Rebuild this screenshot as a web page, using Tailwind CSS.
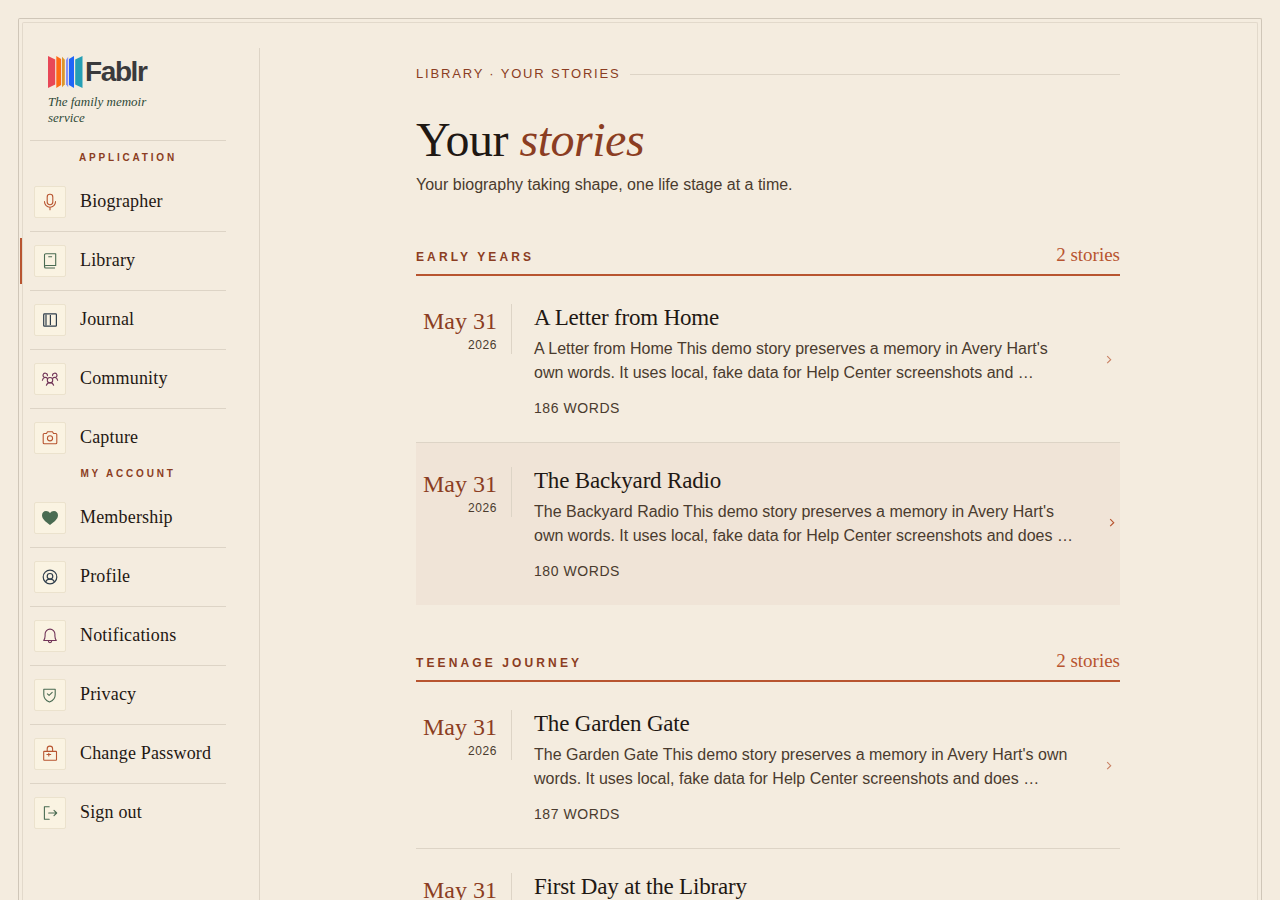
<!DOCTYPE html>
<html lang="en">
<head>
<meta charset="utf-8">
<meta name="viewport" content="width=device-width, initial-scale=1">
<title>Fablr – Your stories</title>
<script src="https://cdn.jsdelivr.net/npm/@tailwindcss/browser@4"></script>
</head>
<body class="h-screen overflow-hidden bg-[#f4ecdf] font-['Liberation_Sans',Arial,sans-serif] text-[#1f1813]">
<div class="mx-[18px] mt-[18px] rounded-t-[2px] border border-b-0 border-[#cfc6b8] px-[3px] pt-[3px]">
<div class="flex min-h-screen rounded-t-[2px] border border-b-0 border-[#e2d9cb] pt-[25px]">

  <aside class="w-[237px] shrink-0 border-r border-[#ddd4c6] pr-[33px] pl-[7px] pt-2">
    <a href="#" class="block border-b border-[#ddd4c6] px-[18px] pb-[14px]">
      <span class="flex h-8 items-center gap-[2px]">
        <svg class="h-8 w-[35px]" viewBox="0 0 35 32" aria-hidden="true">
          <path fill="#e84757" d="M0 0l7.200 3.600v24.800L0 32z"/>
          <path fill="#ff6a13" d="M8.300 0l4.800 3v26l-4.800 3z"/>
          <path fill="#dc962d" d="M14 0.800l2.800 3v24.400l-2.800 3z"/>
          <path fill="#8490f8" d="M20.200 0.800v30.400l-2.200-3V3.800z"/>
          <path fill="#2065f8" d="M26 0v32l-5-3V3z"/>
          <path fill="#259fb5" d="M34.500 0v32L27.200 28.400V3.600z"/>
        </svg>
        <span class="text-[28px] leading-8 font-bold tracking-tighter text-[#3a3a3c]">Fablr</span>
      </span>
      <span class="mt-[6px] block w-[112px] font-['Liberation_Serif',serif] text-[13px] leading-4 text-[#2f4a38] italic">The family memoir service</span>
    </a>

    <nav aria-label="Application">
      <h2 class="pt-[11px] pb-[9px] text-center text-[10px] leading-3 font-bold tracking-[0.28em] text-[#8b3d22]">APPLICATION</h2>
      <ul class="divide-y divide-[#ddd4c6] font-['Liberation_Serif',serif] text-[18px] leading-6 tracking-[0.01em]">
        <li><a href="#" class="flex items-center gap-[14px] px-1 py-[13px]">
          <svg class="size-8 shrink-0 rounded-[2px] border border-[#ebe2cd] bg-[#faf3e2] text-[#b85530]" viewBox="1 1 30 30" fill="none" stroke="currentColor" stroke-width="1.100" stroke-linecap="round" stroke-linejoin="round" aria-hidden="true"><rect x="13.200" y="8.300" width="5.600" height="10.400" rx="2.600"/><path d="M10.500 15.500v.3a5.500 5.400 0 0 0 11 0v-.3M16 21.300v2.500"/></svg>
          <span class="pb-[2px]">Biographer</span></a></li>
        <li class="relative"><span class="absolute top-[6px] -left-[10px] h-[46px] w-[2px] bg-[#b85530]"></span><a href="#" aria-current="page" class="flex items-center gap-[14px] px-1 py-[13px]">
          <svg class="size-8 shrink-0 rounded-[2px] border border-[#ebe2cd] bg-[#faf3e2] text-[#4a6b52]" viewBox="1 1 30 30" fill="none" stroke="currentColor" stroke-width="1.100" stroke-linejoin="round" aria-hidden="true"><path d="M21 23H11.800a1.300 1.300 0 0 1-1.300-1.300V10A1.300 1.300 0 0 1 11.800 8.700h9.900v11.800H11.800a1.300 1.300 0 0 0-1.300 1.200M14.300 11.800h3.800"/></svg>
          <span class="pb-[2px]">Library</span></a></li>
        <li><a href="#" class="flex items-center gap-[14px] px-1 py-[13px]">
          <svg class="size-8 shrink-0 rounded-[2px] border border-[#ebe2cd] bg-[#faf3e2] text-[#2f3e4c]" viewBox="1 1 30 30" fill="none" stroke="currentColor" stroke-width="1.200" aria-hidden="true"><rect x="9.700" y="9.900" width="12.700" height="12.300" rx=".8"/><path d="M12 10.500v11M16.400 11v10"/></svg>
          <span class="pb-[2px]">Journal</span></a></li>
        <li><a href="#" class="flex items-center gap-[14px] px-1 py-[13px]">
          <svg class="size-8 shrink-0 rounded-[2px] border border-[#ebe2cd] bg-[#faf3e2] text-[#713558]" viewBox="1 1 30 30" fill="none" stroke="currentColor" stroke-width="1.100" stroke-linecap="round" aria-hidden="true"><circle cx="16" cy="17.200" r="2.700"/><path d="M12.400 22.200a3.800 3.800 0 0 1 7.200 0M13.400 12.700a2.200 2.200 0 1 0-2.900 1.700M8.400 17.300q.5-2.300 2.300-2.800 1.600-.4 2.600.8M18.600 12.700a2.200 2.200 0 1 1 2.900 1.700M23.600 17.300q-.5-2.300-2.300-2.800-1.600-.4-2.600.8"/></svg>
          <span class="pb-[2px]">Community</span></a></li>
        <li><a href="#" class="flex items-center gap-[14px] px-1 py-[13px]">
          <svg class="size-8 shrink-0 rounded-[2px] border border-[#ebe2cd] bg-[#faf3e2] text-[#b85530]" viewBox="1 1 30 30" fill="none" stroke="currentColor" stroke-width="1.100" stroke-linejoin="round" aria-hidden="true"><path d="M10.200 11.500h2.300l1-1.700h5l1 1.700h2.300q1 0 1 1v8.200q0 1-1 1H10.200q-1 0-1-1v-8.200q0-1 1-1z"/><circle cx="16" cy="16.300" r="2.600"/></svg>
          <span class="pb-[2px]">Capture</span></a></li>
      </ul>
    </nav>

    <nav aria-label="My account">
      <h2 class="pt-px pb-[9px] text-center text-[10px] leading-3 font-bold tracking-[0.28em] text-[#8b3d22]">MY ACCOUNT</h2>
      <ul class="divide-y divide-[#ddd4c6] font-['Liberation_Serif',serif] text-[18px] leading-6 tracking-[0.01em]">
        <li><a href="#" class="flex items-center gap-[14px] px-1 py-[13px]">
          <svg class="size-8 shrink-0 rounded-[2px] border border-[#ebe2cd] bg-[#faf3e2] text-[#4a6b52]" viewBox="1 1 30 30" fill="currentColor" aria-hidden="true"><path d="M16 23C11.500 19.800 8 17 8 13.300 8 10.700 9.800 9 12 9c1.700 0 3.200.9 4 2.300C16.800 9.900 18.300 9 20 9c2.200 0 4 1.700 4 4.300 0 3.700-3.500 6.500-8 9.700z"/></svg>
          <span class="pb-[2px]">Membership</span></a></li>
        <li><a href="#" class="flex items-center gap-[14px] px-1 py-[13px]">
          <svg class="size-8 shrink-0 rounded-[2px] border border-[#ebe2cd] bg-[#faf3e2] text-[#2f3e4c]" viewBox="1 1 30 30" fill="none" stroke="currentColor" stroke-width="1.200" aria-hidden="true"><circle cx="16" cy="16" r="6.800"/><circle cx="16" cy="15.300" r="2.800"/><path d="M11.500 21q1.300-2.800 4.500-2.800t4.500 2.800"/></svg>
          <span class="pb-[2px]">Profile</span></a></li>
        <li><a href="#" class="flex items-center gap-[14px] px-1 py-[13px]">
          <svg class="size-8 shrink-0 rounded-[2px] border border-[#ebe2cd] bg-[#faf3e2] text-[#713558]" viewBox="1 1 30 30" fill="none" stroke="currentColor" stroke-width="1.100" stroke-linecap="round" stroke-linejoin="round" aria-hidden="true"><path d="M9.700 20.500q1.300-1.600 1.400-4.500v-2a4.900 4.900 0 0 1 9.800 0v2q.1 2.900 1.400 4.500zM14.300 20.800a1.700 1.800 0 0 0 3.400 0"/></svg>
          <span class="pb-[2px]">Notifications</span></a></li>
        <li><a href="#" class="flex items-center gap-[14px] px-1 py-[13px]">
          <svg class="size-8 shrink-0 rounded-[2px] border border-[#ebe2cd] bg-[#faf3e2] text-[#4a6b52]" viewBox="1 1 30 30" fill="none" stroke="currentColor" stroke-width="1.100" stroke-linecap="round" stroke-linejoin="round" aria-hidden="true"><path d="M9.800 10.300h11.400v5.400c0 3.700-2.500 6.100-5.700 7.300-3.200-1.200-5.700-3.600-5.700-7.300zM13.400 14.800l1.700 1.600 3.100-3"/></svg>
          <span class="pb-[2px]">Privacy</span></a></li>
        <li><a href="#" class="flex items-center gap-[14px] px-1 py-[13px]">
          <svg class="size-8 shrink-0 rounded-[2px] border border-[#ebe2cd] bg-[#faf3e2] text-[#b85530]" viewBox="1 1 30 30" fill="none" stroke="currentColor" stroke-width="1.100" stroke-linecap="round" aria-hidden="true"><rect x="9.700" y="13.400" width="12.800" height="8.900" rx=".5"/><path d="M13.200 13.200v-2.400a2.700 2.700 0 0 1 5.400 0v2.400M12.900 16.500h3.800M14.800 15.200v2.700"/></svg>
          <span class="pb-[2px]">Change Password</span></a></li>
        <li><a href="#" class="flex items-center gap-[14px] px-1 py-[13px]">
          <svg class="size-8 shrink-0 rounded-[2px] border border-[#ebe2cd] bg-[#faf3e2] text-[#4a6b52]" viewBox="1 1 30 30" fill="none" stroke="currentColor" stroke-width="1.100" stroke-linecap="round" stroke-linejoin="round" aria-hidden="true"><path d="M15.200 9.800h-4.800v12.400h4.800M14.700 16h8M20 13.300l2.700 2.700-2.700 2.700"/></svg>
          <span class="pb-[2px]">Sign out</span></a></li>
      </ul>
    </nav>
  </aside>

  <main class="min-w-0 flex-1 pt-4 pl-[19px]">
    <div class="mx-auto max-w-[704px]">
      <div class="flex items-center gap-[9px] text-[13px] leading-5 tracking-[0.14em] text-[#8b3d22]">
        <span>LIBRARY · YOUR STORIES</span><span class="h-px flex-1 bg-[#ddd4c6]"></span>
      </div>
      <h1 class="mt-[30px] font-['Liberation_Serif',serif] text-[48px] leading-[52px] tracking-[-0.01em]">Your <em class="text-[#8b3d22]">stories</em></h1>
      <p class="mt-[7px] text-[16px] leading-6 text-[#4a3b2e]">Your biography taking shape, one life stage at a time.</p>

      <section class="mt-[46px]">
        <header class="flex items-baseline justify-between border-b-2 border-[#b85530] pb-[5px]">
          <h2 class="text-[12px] leading-6 font-bold tracking-[0.26em] text-[#8b3d22]">EARLY YEARS</h2>
          <span class="font-['Liberation_Serif',serif] text-[19px] leading-6 text-[#b85530]">2 stories</span>
        </header>
        <ul class="divide-y divide-[#ddd4c6] pt-1">
          <li><a href="#" class="grid grid-cols-[96px_minmax(0,1fr)_24px] gap-[22px] pt-6 pb-6">
            <span class="self-start border-r border-[#ddd4c6] pt-1 pr-[14px] pb-px text-right">
              <span class="block font-['Liberation_Serif',serif] text-[24px] leading-[26px] text-[#8b3d22]">May 31</span>
              <span class="mt-[3px] block text-[12px] leading-4 tracking-[0.05em] text-[#4a3b2e]">2026</span>
            </span>
            <span>
              <span class="block font-['Liberation_Serif',serif] text-[23px] leading-7 tracking-[-0.008em]">A Letter from Home</span>
              <span class="mt-[5px] block text-[16px] leading-6 text-[#4a3b2e]">A Letter from Home This demo story preserves a memory in Avery Hart's own words. It uses local, fake data for Help Center screenshots and …</span>
              <span class="mt-[13px] block text-[14px] leading-5 tracking-[0.04em] text-[#4a3b2e]">186 WORDS</span>
            </span>
            <svg class="mx-auto size-[14px] self-center text-[#b85530] opacity-70" viewBox="0 0 14 14" fill="none" stroke="currentColor" stroke-width="1.100" aria-hidden="true"><path d="M6.200 2.200L9.700 5.700l-3.500 3.500"/></svg>
          </a></li>
          <li><a href="#" class="grid grid-cols-[96px_minmax(0,1fr)_24px] gap-[22px] bg-[#f0e4d7] pt-6 pb-6">
            <span class="self-start border-r border-[#ddd4c6] pt-1 pr-[14px] pb-px text-right">
              <span class="block font-['Liberation_Serif',serif] text-[24px] leading-[26px] text-[#8b3d22]">May 31</span>
              <span class="mt-[3px] block text-[12px] leading-4 tracking-[0.05em] text-[#4a3b2e]">2026</span>
            </span>
            <span>
              <span class="block font-['Liberation_Serif',serif] text-[23px] leading-7 tracking-[-0.008em]">The Backyard Radio</span>
              <span class="mt-[5px] block text-[16px] leading-6 text-[#4a3b2e]">The Backyard Radio This demo story preserves a memory in Avery Hart's own words. It uses local, fake data for Help Center screenshots and does …</span>
              <span class="mt-[13px] block text-[14px] leading-5 tracking-[0.04em] text-[#4a3b2e]">180 WORDS</span>
            </span>
            <svg class="mr-[2px] ml-auto size-[14px] self-center text-[#b85530]" viewBox="0 0 14 14" fill="none" stroke="currentColor" stroke-width="1.200" aria-hidden="true"><path d="M6.200 2.200L9.700 5.700l-3.500 3.500"/></svg>
          </a></li>
        </ul>
      </section>

      <section class="mt-[44px]">
        <header class="flex items-baseline justify-between border-b-2 border-[#b85530] pb-[5px]">
          <h2 class="text-[12px] leading-6 font-bold tracking-[0.26em] text-[#8b3d22]">TEENAGE JOURNEY</h2>
          <span class="font-['Liberation_Serif',serif] text-[19px] leading-6 text-[#b85530]">2 stories</span>
        </header>
        <ul class="divide-y divide-[#ddd4c6] pt-1">
          <li><a href="#" class="grid grid-cols-[96px_minmax(0,1fr)_24px] gap-[22px] pt-6 pb-6">
            <span class="self-start border-r border-[#ddd4c6] pt-1 pr-[14px] pb-px text-right">
              <span class="block font-['Liberation_Serif',serif] text-[24px] leading-[26px] text-[#8b3d22]">May 31</span>
              <span class="mt-[3px] block text-[12px] leading-4 tracking-[0.05em] text-[#4a3b2e]">2026</span>
            </span>
            <span>
              <span class="block font-['Liberation_Serif',serif] text-[23px] leading-7 tracking-[-0.008em]">The Garden Gate</span>
              <span class="mt-[5px] block text-[16px] leading-6 text-[#4a3b2e]">The Garden Gate This demo story preserves a memory in Avery Hart's own words. It uses local, fake data for Help Center screenshots and does …</span>
              <span class="mt-[13px] block text-[14px] leading-5 tracking-[0.04em] text-[#4a3b2e]">187 WORDS</span>
            </span>
            <svg class="mx-auto size-[14px] self-center text-[#b85530] opacity-70" viewBox="0 0 14 14" fill="none" stroke="currentColor" stroke-width="1.100" aria-hidden="true"><path d="M6.200 2.200L9.700 5.700l-3.500 3.500"/></svg>
          </a></li>
          <li><a href="#" class="grid grid-cols-[96px_minmax(0,1fr)_24px] gap-[22px] pt-6 pb-6">
            <span class="self-start border-r border-[#ddd4c6] pt-1 pr-[14px] pb-px text-right">
              <span class="block font-['Liberation_Serif',serif] text-[24px] leading-[26px] text-[#8b3d22]">May 31</span>
            </span>
            <span>
              <span class="block font-['Liberation_Serif',serif] text-[23px] leading-7 tracking-[-0.008em]">First Day at the Library</span>
            </span>
          </a></li>
        </ul>
      </section>
    </div>
  </main>
</div>
</div>
</body>
</html>
